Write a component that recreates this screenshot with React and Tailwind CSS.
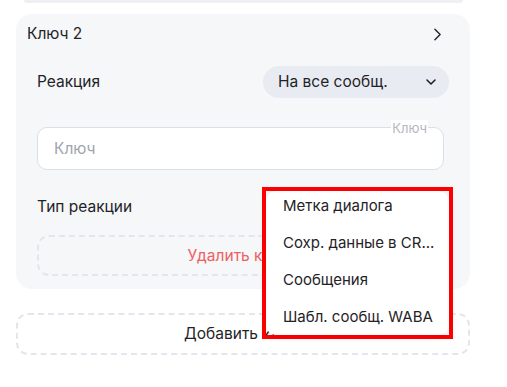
import React from 'react'
import { ChevronRight, ChevronDown } from 'lucide-react'

const menuItems = ['Метка диалога', 'Сохр. данные в CR...', 'Сообщения', 'Шабл. сообщ. WABA']

export default function App() {
  return (
    <div className="relative h-[387px] w-[507px] overflow-hidden bg-white font-['Inter',sans-serif] text-[#1f2328]">
      {/* previous card, only its bottom edge is visible */}
      <div className="ml-[24px] h-[3px] w-[439px] rounded-b-[10px] bg-[#eef0f3]" />

      <div className="ml-[16px] mt-[11px] h-[275px] w-[454px] rounded-[16px] bg-[#f6f7f9]">
        <div className="flex items-center justify-between pl-[11px] pr-[22px] pt-[9px]">
          <span className="text-[15.5px] leading-[22px]">Ключ 2</span>
          <ChevronRight className="h-[21px] w-[21px]" strokeWidth={1.6} />
        </div>

        <div className="px-[21px]">
          <div className="mt-[21px] flex items-center justify-between">
            <span className="text-[15.5px]">Реакция</span>
            <button className="flex h-[32px] w-[186px] items-center justify-between rounded-full bg-[#e8ecf2] pl-[15px] pr-[10px] text-[15.5px]">
              <span>На все сообщ.</span>
              <ChevronDown className="h-[16px] w-[16px]" strokeWidth={2.4} />
            </button>
          </div>

          <div className="relative mt-[29px] w-[407px]">
            <input
              placeholder="Ключ"
              className="h-[43px] w-full rounded-[10px] border border-[#dcdfe4] bg-white px-[16px] text-[15.5px] placeholder:text-[#a0a5ad] outline-none"
            />
            <span className="absolute right-[16px] top-[-7px] bg-white px-[1px] text-[13px] leading-[16px] text-[#b3b8bf]">Ключ</span>
          </div>

          <div className="mt-[25px] flex items-center">
            <span className="text-[15.5px]">Тип реакции</span>
          </div>

          <button className="mt-[17px] flex h-[41px] w-[407px] items-center justify-center rounded-[12px] border-2 border-dashed border-[#e3e7ed] text-[15.5px] text-[#ec6060]">
            Удалить ключ
          </button>
        </div>
      </div>

      <button className="ml-[16px] mt-[24px] flex h-[42px] w-[454px] items-center justify-center rounded-[12px] border-2 border-dashed border-[#e3e7ed] text-[15.5px]">
        Добавить ключ
      </button>

      {/* dropdown menu, highlighted */}
      <div className="absolute left-[262px] top-[187px] h-[152px] w-[191px] border-[4px] border-[#ff0000]">
        <div className="h-full w-full overflow-hidden rounded-[10px] bg-white shadow-[0_2px_8px_rgba(0,0,0,0.08)]">
          <ul className="-mt-[3px]">
            {menuItems.map((item) => (
              <li key={item} className="flex h-[37px] items-center pl-[17px] pr-[4px] text-[15px]">
                <span className="truncate">{item}</span>
              </li>
            ))}
          </ul>
        </div>
      </div>
    </div>
  )
}
